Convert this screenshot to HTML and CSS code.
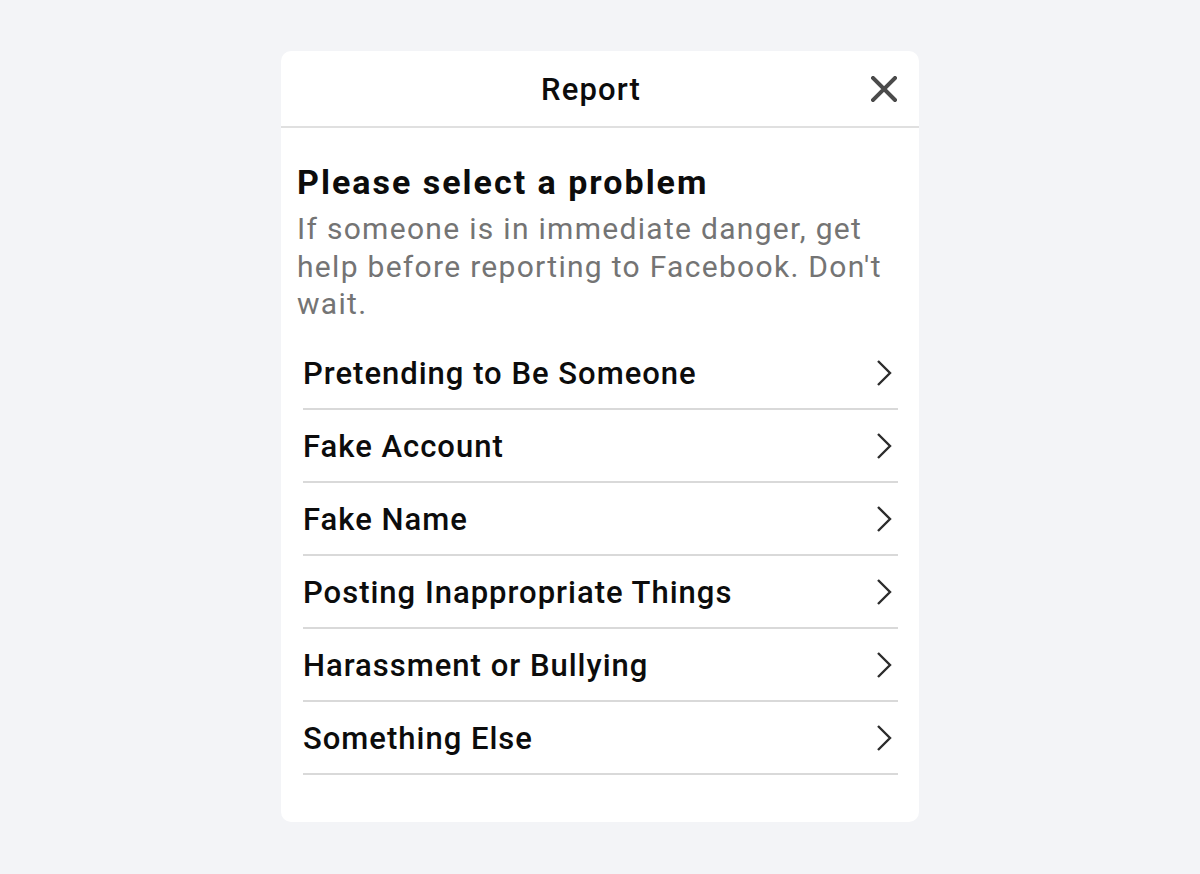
FILE: index.html
```html
<!DOCTYPE html>
<html lang="en">
<head>
    <meta charset="UTF-8">
    <meta name="viewport" content="width=device-width, initial-scale=1.0">
    <title>Report</title>
    <link rel="stylesheet" href="styles.css">
</head>
<body>

<div class="report">
  <header class="report__head">
    <h1 class="report__title">Report</h1>
    <button class="report__close" aria-label="Close">
      <svg viewBox="0 0 26 26" width="26" height="26">
        <path d="M2 2 L24 24 M24 2 L2 24" stroke="#4b4b4b" stroke-width="4" stroke-linecap="square" fill="none"/>
      </svg>
    </button>
  </header>

  <div class="report__body">
    <h2 class="report__heading">Please select a problem</h2>
    <p class="report__note">If someone is in immediate danger, get help before reporting to Facebook. Don't wait.</p>

    <!-- each row ends with the same thin chevron -->
    <ul class="problem-list">
      <li>Pretending to Be Someone <svg class="chev" viewBox="0 0 16 28"><path d="M2 2 L14 14 L2 26"/></svg></li>
      <li>Fake Account <svg class="chev" viewBox="0 0 16 28"><path d="M2 2 L14 14 L2 26"/></svg></li>
      <li>Fake Name <svg class="chev" viewBox="0 0 16 28"><path d="M2 2 L14 14 L2 26"/></svg></li>
      <li>Posting Inappropriate Things <svg class="chev" viewBox="0 0 16 28"><path d="M2 2 L14 14 L2 26"/></svg></li>
      <li>Harassment or Bullying <svg class="chev" viewBox="0 0 16 28"><path d="M2 2 L14 14 L2 26"/></svg></li>
      <li>Something Else <svg class="chev" viewBox="0 0 16 28"><path d="M2 2 L14 14 L2 26"/></svg></li>
    </ul>
  </div>
</div>

</body>
</html>
```

FILE: styles.css
```css
:root {
  --clr-bg: #f3f4f7;
  --clr-card: #ffffff;
  --clr-text: #0c0c0c;
  --clr-muted: #747474;
  --clr-line: #d9d9d9;
}

* {
  box-sizing: border-box;
}

body {
  margin: 0;
  min-height: 100vh;
  background: var(--clr-bg);
  font-family: Roboto, "Noto Sans", sans-serif;
  color: var(--clr-text);
  display: flex;
  justify-content: center;
  padding-top: 51px;
}

.report {
  width: 638px;
  height: 771px;
  background: var(--clr-card);
  border-radius: 10px;
}

/* header */

.report__head {
  position: relative;
  height: 77px;
  display: flex;
  align-items: center;
  justify-content: center;
  border-bottom: 2px solid #e0e0e0;
}

.report__title {
  margin: 0;
  font-size: 31px;
  font-weight: 500;
  letter-spacing: 1.1px;
  padding-top: 1px;
  padding-right: 18px;
}

.report__close {
  position: absolute;
  right: 22px;
  top: 25px;
  padding: 0;
  border: 0;
  background: none;
  line-height: 0;
}

/* body */

.report__body {
  padding: 34px 21px 0 16px;
}

.report__heading {
  margin: 0;
  font-size: 34px;
  font-weight: 700;
  line-height: 40px;
  letter-spacing: 2px;
}

.report__note {
  margin: 8px 0 0;
  font-size: 30px;
  line-height: 37.5px;
  letter-spacing: 1.3px;
  color: var(--clr-muted);
}

.problem-list {
  margin: 14px 0 0 6px;
  padding: 0;
  list-style: none;
}

.problem-list li {
  height: 73px;
  display: flex;
  align-items: center;
  justify-content: space-between;
  font-size: 31px;
  font-weight: 500;
  letter-spacing: 1px;
  border-bottom: 2px solid var(--clr-line);
  padding-top: 2px;
}

.chev {
  width: 16px;
  height: 28px;
  margin-right: 6px;
  fill: none;
  stroke: #2c2c2c;
  stroke-width: 2.4;
}
```
